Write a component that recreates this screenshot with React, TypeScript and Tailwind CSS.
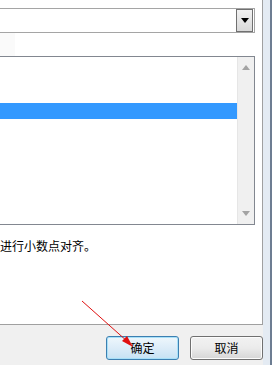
import React from 'react';

const font = { fontFamily: '"Noto Sans CJK SC", "Liberation Sans", sans-serif' };

function Triangle({ dir, className }: { dir: 'up' | 'down'; className?: string }) {
  return (
    <svg width="8" height="5" viewBox="0 0 8 5" className={className}>
      {dir === 'down' ? <path d="M0 0 H8 L4 5 Z" fill="currentColor" /> : <path d="M0 5 H8 L4 0 Z" fill="currentColor" />}
    </svg>
  );
}

function DialogButton({ label, primary }: { label: string; primary?: boolean }) {
  return (
    <button
      className={
        'w-[73px] h-[24px] rounded-[3px] text-[12px] text-black flex items-center justify-center ' +
        (primary
          ? 'border border-[#3c7fb1] shadow-[inset_0_0_0_1px_#a8e0f8] bg-gradient-to-b from-[#eef7fc] via-[#dcecf8] to-[#c6e2f4]'
          : 'border border-[#707070] shadow-[inset_0_0_0_1px_#fcfcfc] bg-gradient-to-b from-[#f2f2f2] via-[#ebebeb] to-[#d6d6d6]')
      }
      style={font}
    >
      {label}
    </button>
  );
}

export default function App() {
  return (
    <div className="relative w-[272px] h-[365px] flex bg-[#f0f0f0] overflow-hidden" style={font}>
      {/* 对话框主体 */}
      <div className="w-[263px] flex flex-col">
        <div className="h-[325px] bg-white border-r border-b border-[#a0a0a0] flex flex-col">
          {/* 下拉框 */}
          <div className="mt-[8px] h-[25px] w-[255px] border border-l-0 border-[#a5a5a5] bg-white flex justify-end items-center pr-[1px]">
            <div className="w-[17px] h-[23px] border border-[#707070] bg-gradient-to-b from-[#f2f2f2] to-[#d9d9d9] flex items-center justify-center">
              <Triangle dir="down" className="text-black" />
            </div>
          </div>

          <div className="h-[23px] w-[15px] bg-[#fafafa]" />

          {/* 列表 */}
          <div className="h-[169px] w-[255px] border border-l-0 border-[#828790] bg-white flex">
            <div className="flex-1 flex flex-col">
              <div className="h-[46px]" />
              <div className="h-[16px] bg-[#3399ff]" />
            </div>
            <div className="w-[17px] bg-[#f0f0f0] border-l border-[#e6e6e6] flex flex-col justify-between items-center py-[8px]">
              <Triangle dir="up" className="text-[#a3a3a3]" />
              <Triangle dir="down" className="text-[#a3a3a3]" />
            </div>
          </div>

          <div className="mt-[13px] text-[12px] leading-[16px] text-black">进行小数点对齐。</div>
        </div>

        {/* 按钮 */}
        <div className="flex-1 flex justify-end items-start pt-[11px] gap-[11px]">
          <DialogButton label="确定" primary />
          <DialogButton label="取消" />
        </div>
      </div>

      {/* 窗口边框 */}
      <div className="w-[7px] bg-[#e4ebf3]" />
      <div className="w-[2px] bg-[#6d7d92]" />

      {/* 红色标注箭头 */}
      <svg className="absolute left-0 top-0 pointer-events-none" width="272" height="365">
        <line x1="82" y1="301" x2="128" y2="342" stroke="#e01010" strokeWidth="1" />
        <path d="M133 347 L122 341 L127 336 Z" fill="#e01010" />
      </svg>
    </div>
  );
}
